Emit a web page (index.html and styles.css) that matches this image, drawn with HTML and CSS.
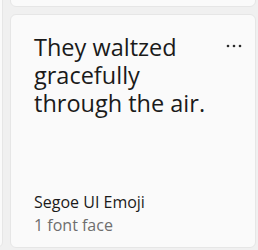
FILE: index.html
```html
<!DOCTYPE html>
<html lang="en">
<head>
    <meta charset="UTF-8">
    <title>Fonts</title>
    <link rel="stylesheet" href="styles.css">
</head>
<body>
    <div class="grid">
        <div class="card stub-left"></div>
        <div class="card stub-top"></div>
        <div class="card font-card">
            <div class="card-head">
                <p class="sample">They waltzed gracefully through the air.</p>
                <svg class="more" width="16" height="4" viewBox="0 0 16 4">
                    <circle cx="2" cy="2" r="1.3"/>
                    <circle cx="8" cy="2" r="1.3"/>
                    <circle cx="14" cy="2" r="1.3"/>
                </svg>
            </div>
            <div class="card-foot">
                <div class="font-name">Segoe UI Emoji</div>
                <div class="font-count">1 font face</div>
            </div>
        </div>
    </div>
</body>
</html>
```
FILE: styles.css
```css
body {
    margin: 0;
    background-color: #f0f0f0;
    font-family: "Open Sans", "Noto Sans", sans-serif;
    overflow: hidden;
}
.grid {
    display: grid;
    grid-template-columns: 240px 246px;
    grid-template-rows: 40px 234px;
    gap: 7px;
    margin: -33px 0 0 -237px;
}
.card {
    background-color: #fafafa;
    border: 1px solid #e6e6e6;
    border-radius: 6px;
    box-sizing: border-box;
}
.stub-left {
    grid-row: 1 / 3;
}
.font-card {
    display: flex;
    flex-direction: column;
    justify-content: space-between;
    padding: 18px 13px 10px 23px;
}
.card-head {
    display: flex;
    justify-content: space-between;
    align-items: flex-start;
}
.sample {
    margin: 0;
    flex: 0 0 185px;
    font-size: 23.5px;
    line-height: 28px;
    color: #1a1a1a;
}
.more {
    fill: #2b2b2b;
    margin-top: 11px;
}
.font-name {
    font-size: 16px;
    line-height: 23px;
    color: #1a1a1a;
}
.font-count {
    font-size: 16px;
    line-height: 23px;
    color: #6e6e6e;
}
```
